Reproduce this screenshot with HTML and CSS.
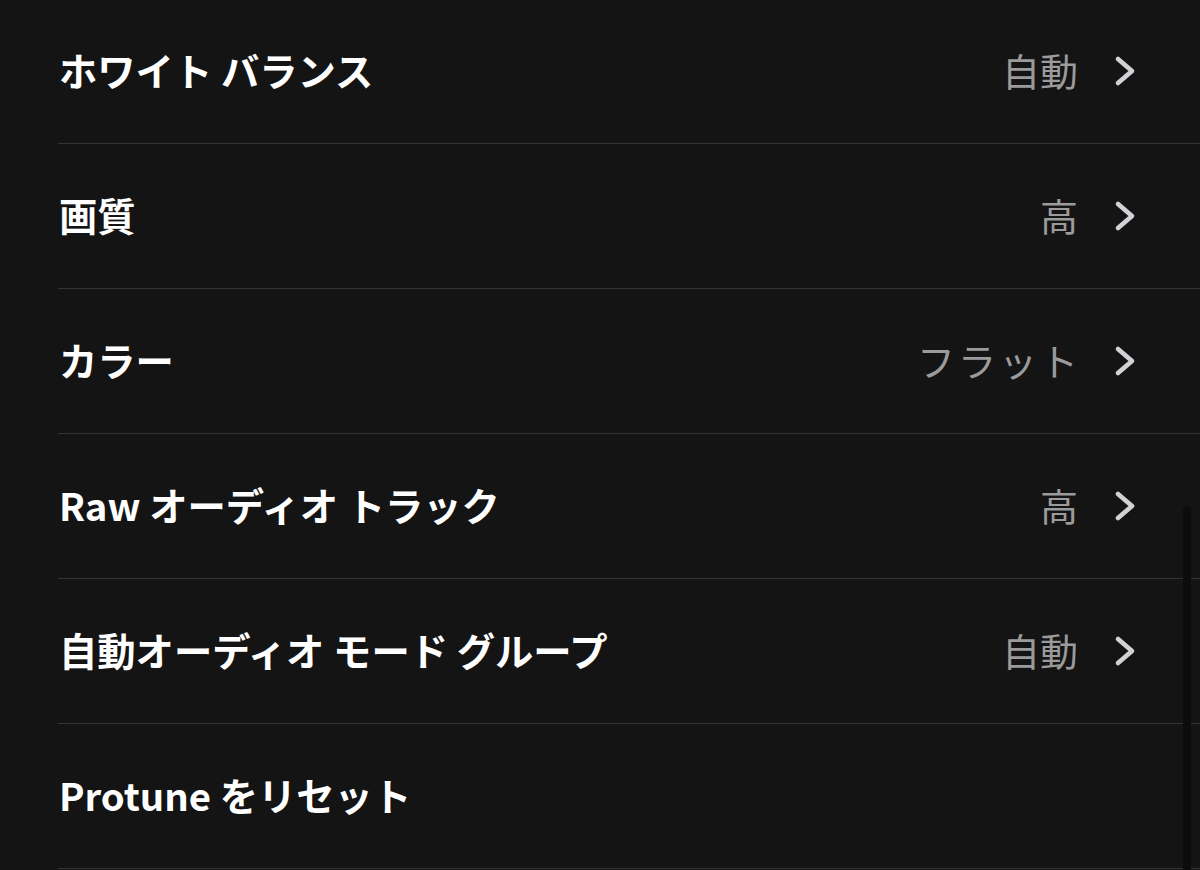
FILE: index.html
```html
<!DOCTYPE html>
<html lang="ja">
<head>
<meta charset="utf-8">
<link rel="stylesheet" href="styles.css">
</head>
<body>
<div class="list">
  <div class="row"><span class="label">ホワイト バランス</span><span class="value">自動</span><svg class="chev" viewBox="0 0 24 32"><path d="M4 4 L18 16 L4 28"/></svg></div>
  <div class="row"><span class="label">画質</span><span class="value">高</span><svg class="chev" viewBox="0 0 24 32"><path d="M4 4 L18 16 L4 28"/></svg></div>
  <div class="row"><span class="label">カラー</span><span class="value wide">フラット</span><svg class="chev" viewBox="0 0 24 32"><path d="M4 4 L18 16 L4 28"/></svg></div>
  <div class="row"><span class="label">Raw オーディオ トラック</span><span class="value">高</span><svg class="chev" viewBox="0 0 24 32"><path d="M4 4 L18 16 L4 28"/></svg></div>
  <div class="row"><span class="label">自動オーディオ モード グループ</span><span class="value">自動</span><svg class="chev" viewBox="0 0 24 32"><path d="M4 4 L18 16 L4 28"/></svg></div>
  <div class="row"><span class="label">Protune をリセット</span></div>
</div>
<div class="scrollbar"></div>
</body>
</html>
```
FILE: styles.css
```css
html, body {
  margin: 0;
  padding: 0;
  background: #141414;
  height: 100%;
  overflow: hidden;
}
body {
  font-family: "Noto Sans CJK JP", "Noto Sans", sans-serif;
  position: relative;
}
.list {
  display: flex;
  flex-direction: column;
  padding-left: 58px;
  margin-top: -1px;
}
.row {
  display: flex;
  align-items: center;
  height: 144px;
  box-sizing: border-box;
  height: 145px;
  padding-bottom: 3px;
  border-bottom: 1px solid #333333;
  padding-right: 62px;
}
.label {
  flex: 1;
  color: #ffffff;
  font-weight: 700;
  font-size: 38.3px;
  padding-left: 1px;
}
.value {
  color: #9b9b9b;
  font-size: 38px;
  font-weight: 400;
  margin-right: 36px;
}
.value.wide {
  letter-spacing: 3px;
  margin-right: 33px;
}
.chev {
  width: 24px;
  height: 32px;
  margin-top: 2px;
  fill: none;
  stroke: #d2d2d6;
  stroke-width: 4.6;
  stroke-linecap: round;
  stroke-linejoin: round;
}
.scrollbar {
  position: absolute;
  right: 9px;
  top: 506px;
  width: 8px;
  height: 380px;
  border-radius: 4px;
  background: #0c0c0c;
}
```
